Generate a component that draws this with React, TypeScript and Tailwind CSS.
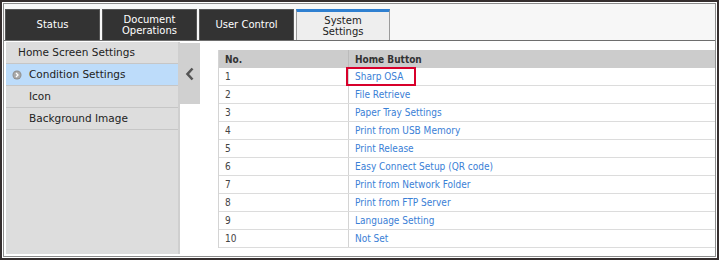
import React from "react";

const tabs = [
  { label: "Status" },
  { label: "Document Operations", lines: ["Document", "Operations"] },
  { label: "User Control" },
  { label: "System Settings", lines: ["System", "Settings"], active: true },
];

const menu = [
  { label: "Home Screen Settings", top: true },
  { label: "Condition Settings", selected: true },
  { label: "Icon" },
  { label: "Background Image" },
];

const rows = [
  "Sharp OSA",
  "File Retrieve",
  "Paper Tray Settings",
  "Print from USB Memory",
  "Print Release",
  "Easy Connect Setup (QR code)",
  "Print from Network Folder",
  "Print from FTP Server",
  "Language Setting",
  "Not Set",
];

export default function App() {
  return (
    <div className="w-[719px] h-[260px] overflow-hidden bg-white border-2 border-[#352e2e] p-px font-['DejaVu_Sans',Verdana,sans-serif] text-[10px]">
      <div className="h-full border border-[#8c8c8c] flex flex-col">
        {/* Tab bar */}
        <div className="h-[37px] bg-[#f7f7f7] border-b border-[#6e6e6e] flex items-end gap-[2px] pl-px shrink-0">
          {tabs.map((t, i) => (
            <div
              key={i}
              className={
                t.active
                  ? "w-[94px] h-[31px] bg-[#eeeeee] border-t-[3px] border-x border-t-[#2f80d1] border-x-[#9a9a9a] flex flex-col items-center justify-center text-[#222] leading-[11px]"
                  : "w-[95px] h-[31px] bg-[#333333] border border-[#555] border-b-0 flex flex-col items-center justify-center text-white leading-[11px]"
              }
            >
              {t.lines ? t.lines.map((l) => <span key={l}>{l}</span>) : <span className="-mt-[2px]">{t.label}</span>}
            </div>
          ))}
        </div>

        {/* Body */}
        <div className="flex-1 flex pt-px pl-[2px] pb-[2px] min-h-0">
          <div className="w-[174px] bg-[#dddddd] border-r-2 border-[#cfcfcf] flex flex-col text-[#222] text-[10.5px]">
            {menu.map((m, i) => (
              <div
                key={i}
                className={
                  "h-[22px] flex items-center border-b border-[#c6c6c6] " +
                  (m.selected ? "bg-[#bddcfa] " : "") +
                  (m.top ? "pl-[12px]" : "pl-[23px]")
                }
              >
                {m.selected && (
                  <svg width="10" height="10" viewBox="0 0 10 10" className="-ml-[17px] mr-[7px]">
                    <circle cx="5" cy="5" r="4.5" fill="#8d8d8d" />
                    <circle cx="5" cy="5" r="3.6" fill="#a9a9a9" />
                    <path d="M4 3 L6 5 L4 7" stroke="#fff" strokeWidth="1.3" fill="none" />
                  </svg>
                )}
                {m.label}
              </div>
            ))}
          </div>

          <div className="w-[20px] h-[61px] mt-px bg-[#d0d0d0] flex items-center justify-center">
            <svg width="10" height="14" viewBox="0 0 10 14">
              <path d="M7.5 1.5 L2.5 7 L7.5 12.5" stroke="#555" strokeWidth="2.6" fill="none" />
            </svg>
          </div>

          <div className="flex-1 pl-[18px] pt-[8px] min-w-0 font-['DejaVu_Sans_Condensed','DejaVu_Sans',sans-serif]">
            <div className="border-l border-[#d4d4d4]">
              <div className="flex h-[18px] bg-[#cccccc] font-bold text-[#333] items-center">
                <div className="w-[130px] pl-[6px] border-r border-[#bbb] h-full flex items-center">No.</div>
                <div className="pl-[6px]">Home Button</div>
              </div>
              {rows.map((r, i) => (
                <div key={i} className="flex h-[18px] border-b border-[#dcdcdc] bg-white">
                  <div className="w-[130px] pl-[6px] border-r border-[#d4d4d4] flex items-center text-[#444]">{i + 1}</div>
                  <div className="relative pl-[6px] flex items-center text-[#3a80d6]">
                    {i === 0 && (
                      <div className="absolute left-[-3px] top-[-1px] w-[70px] h-[19px] border-2 border-[#d8002b]" />
                    )}
                    {r}
                  </div>
                </div>
              ))}
            </div>
          </div>
        </div>
      </div>
    </div>
  );
}
